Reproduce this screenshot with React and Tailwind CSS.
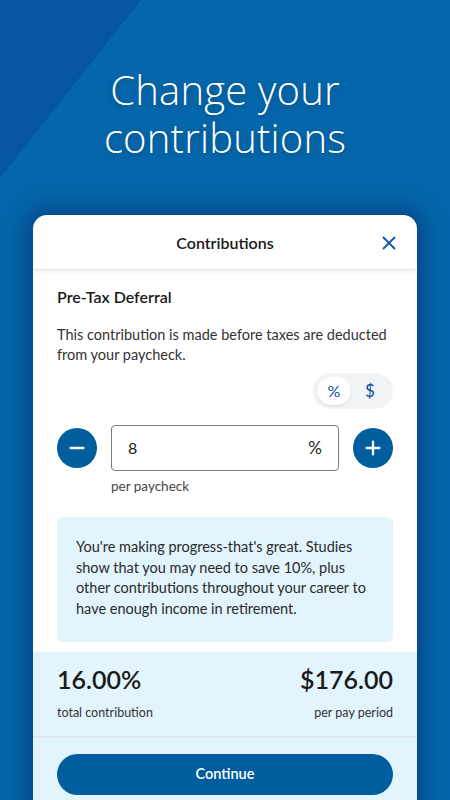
import { Minus, Plus, X } from 'lucide-react';

const App = () => {
  return (
    <div className="relative w-[450px] h-[800px] overflow-hidden bg-[#0567ab] font-['Lato',_'Noto_Sans',_sans-serif]">
      {/* Dark diagonal corner */}
      <svg className="absolute left-0 top-0" width="450" height="800" viewBox="0 0 450 800">
        <polygon points="0,0 141,0 0,178" fill="#0555a0" />
      </svg>

      <div className="relative flex flex-col items-center">
        <h1 className="pt-[66px] text-center font-['Open_Sans',_sans-serif] text-[40px] font-light leading-[48px] tracking-[0.2px] text-white [text-shadow:0_2px_6px_rgba(0,0,0,0.25)]">
          Change your
          <br />
          contributions
        </h1>

        {/* Card */}
        <div className="mt-[53px] w-[384px] overflow-hidden rounded-t-[14px] bg-white shadow-[0_0_22px_8px_rgba(3,45,110,0.55)]">
          {/* Header */}
          <div className="relative flex h-[55px] items-center justify-center border-b border-[#e6e6e6] shadow-[0_2px_3px_rgba(0,0,0,0.06)]">
            <span className="pt-[2px] text-[16px] font-semibold text-[#1a1a1a]">Contributions</span>
            <button className="absolute right-[17px] top-[17px] text-[#0a5aa0]">
              <X size={22} strokeWidth={2} />
            </button>
          </div>

          <div className="px-6 pt-[16px]">
            <h2 className="text-[16px] font-semibold leading-[22px] text-[#1a1a1a]">Pre-Tax Deferral</h2>
            <p className="mt-[17px] text-[14.5px] leading-[20px] text-[#333]">
              This contribution is made before taxes are deducted from your paycheck.
            </p>

            {/* Toggle */}
            <div className="mt-[8px] flex justify-end">
              <div className="flex h-[36px] w-[80px] items-center rounded-full bg-[#f1f3f4] p-[4px]">
                <div className="flex h-[28px] w-[34px] items-center justify-center rounded-full bg-white text-[16px] text-[#0a4ea0] shadow-[0_1px_2px_rgba(0,0,0,0.12)]">
                  %
                </div>
                <div className="flex flex-1 items-center justify-center text-[17px] text-[#0a4ea0]">$</div>
              </div>
            </div>

            {/* Stepper */}
            <div className="mt-[16px] flex items-center gap-[14px]">
              <button className="flex h-[40px] w-[40px] shrink-0 items-center justify-center rounded-full bg-[#005d9e] text-white">
                <Minus size={22} strokeWidth={2.5} />
              </button>
              <div className="flex h-[46px] flex-1 items-center justify-between rounded-[4px] border border-[#7a7a7a] px-[16px]">
                <span className="text-[16px] text-[#222]">8</span>
                <span className="text-[17px] text-[#222]">%</span>
              </div>
              <button className="flex h-[40px] w-[40px] shrink-0 items-center justify-center rounded-full bg-[#005d9e] text-white">
                <Plus size={22} strokeWidth={2.5} />
              </button>
            </div>
            <p className="ml-[54px] mt-[6px] text-[13.5px] leading-[18px] text-[#444]">per paycheck</p>

            {/* Info box */}
            <div className="mt-[22px] rounded-[6px] bg-[#e2f4fc] px-[19px] pt-[20px] pb-[22px]">
              <p className="text-[14.5px] leading-[20.7px] text-[#2a2a2a]">
                You're making progress-that's great. Studies show that you may need to save 10%, plus other
                contributions throughout your career to have enough income in retirement.
              </p>
            </div>
          </div>

          {/* Totals */}
          <div className="mt-[10px] bg-[#e2f4fc]">
            <div className="flex justify-between border-b-2 border-[#dfe6ea] px-6 pt-[11px] pb-[15px]">
              <div>
                <div className="text-[25px] font-semibold leading-[32px] text-[#1a1a1a]">16.00%</div>
                <div className="mt-[10px] text-[12.5px] leading-[16px] text-[#333]">total contribution</div>
              </div>
              <div className="text-right">
                <div className="text-[25px] font-semibold leading-[32px] text-[#1a1a1a]">$176.00</div>
                <div className="mt-[10px] text-[12.5px] leading-[16px] text-[#333]">per pay period</div>
              </div>
            </div>
            <div className="px-6 pt-[16px] pb-[20px]">
              <button className="flex h-[41px] w-full items-center justify-center rounded-full bg-[#005d9e] text-[14.5px] font-semibold text-white">
                Continue
              </button>
            </div>
          </div>
        </div>
      </div>
    </div>
  );
};

export default App;
